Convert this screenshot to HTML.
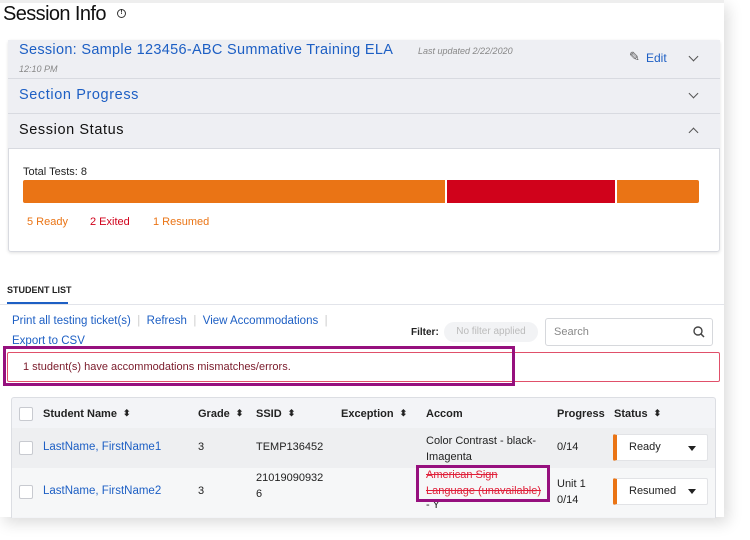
<!DOCTYPE html>
<html><head><meta charset="utf-8"><style>
*{margin:0;padding:0;box-sizing:border-box}
body{width:750px;height:540px;overflow:hidden;background:#fff;font-family:"Liberation Sans",sans-serif;position:relative}
.a{position:absolute;white-space:nowrap}
.page{position:absolute;left:0;top:0;width:724px;height:517px;background:#fff;box-shadow:4px 6px 14px rgba(0,0,0,.14)}
.blue{color:#1d5fc4}
.hdr{position:absolute;left:8px;width:712px;background:#eeeff3;border-bottom:1px solid #d8dae0}
.chev{position:absolute;width:7px;height:7px;border-right:1.3px solid #555;border-bottom:1.3px solid #555}
.sort{display:inline-block;margin-left:6px;font-size:9px;vertical-align:1px}
.t{font-size:11px;color:#222}
</style></head><body>
<div class="page">
<div class="a" style="left:0;top:0;width:724px;height:3px;background:#eee"></div>
<div class="a" style="left:3px;top:3px;font-size:20px;color:#111;letter-spacing:-.6px">Session Info</div>
<div class="a" style="left:117px;top:9px;width:9px;height:9px;border:1.3px solid #333;border-radius:50%;font-size:6px;line-height:7px;text-align:center;font-weight:bold">!</div>

<div class="a" style="left:8px;top:40px;width:712px;height:212px;border:1px solid #d8dae0;border-radius:3px;box-shadow:0 1px 3px rgba(0,0,0,.12)"></div>
<div class="hdr" style="top:40px;height:39px"></div>
<div class="a blue" style="left:19px;top:42px;font-size:14.5px;letter-spacing:.3px">Session: Sample 123456-ABC Summative Training ELA</div>
<div class="a" style="left:418px;top:46px;font-size:9px;font-style:italic;color:#888">Last updated 2/22/2020</div>
<div class="a" style="left:19px;top:64px;font-size:9px;font-style:italic;color:#888">12:10 PM</div>
<div class="a" style="left:629px;top:49px;font-size:13px;color:#555">✎</div>
<div class="a blue" style="left:646px;top:51px;font-size:12px">Edit</div>
<div class="chev" style="left:690px;top:53px;transform:rotate(45deg)"></div>
<div class="hdr" style="top:79px;height:35px"></div>
<div class="a blue" style="left:19px;top:87px;font-size:14.5px;letter-spacing:.6px">Section Progress</div>
<div class="chev" style="left:690px;top:90px;transform:rotate(45deg)"></div>
<div class="hdr" style="top:114px;height:35px"></div>
<div class="a" style="left:19px;top:122px;font-size:14.5px;letter-spacing:.6px;color:#111">Session Status</div>
<div class="chev" style="left:690px;top:129px;transform:rotate(-135deg)"></div>

<div class="a t" style="left:23px;top:166px">Total Tests: 8</div>
<div class="a" style="left:23px;top:180px;width:422px;height:23px;background:#ea7415;border-radius:2px 0 0 2px"></div>
<div class="a" style="left:447px;top:180px;width:168px;height:23px;background:#d0021b"></div>
<div class="a" style="left:617px;top:180px;width:82px;height:23px;background:#ea7415;border-radius:0 2px 2px 0"></div>
<div class="a" style="left:27px;top:216px;font-size:11px;color:#ea7415">5 Ready</div>
<div class="a" style="left:90px;top:216px;font-size:11px;color:#d0021b">2 Exited</div>
<div class="a" style="left:153px;top:216px;font-size:11px;color:#ea7415">1 Resumed</div>

<div class="a" style="left:7px;top:285px;font-size:9px;font-weight:bold;color:#222">STUDENT LIST</div>
<div class="a" style="left:0;top:304px;width:724px;height:1px;background:#e2e4ea"></div>
<div class="a" style="left:7px;top:302px;width:61px;height:2px;background:#1d5fc4"></div>
<div class="a blue" style="left:12px;top:315px;font-size:11.5px">Print all testing ticket(s) <span style="color:#ccc">&nbsp;|&nbsp;</span> Refresh <span style="color:#ccc">&nbsp;|&nbsp;</span> View Accommodations <span style="color:#ccc">&nbsp;|</span></div>
<div class="a blue" style="left:12px;top:335px;font-size:11.5px">Export to CSV</div>
<div class="a" style="left:411px;top:327px;font-size:10px;font-weight:bold;color:#222">Filter:</div>
<div class="a" style="left:444px;top:322px;width:94px;height:20px;background:#f2f3f5;border-radius:10px;font-size:10px;color:#bbb;line-height:20px;text-align:center">No filter applied</div>
<div class="a" style="left:545px;top:318px;width:168px;height:28px;border:1px solid #d6d8dc;border-radius:3px"></div>
<div class="a" style="left:554px;top:326px;font-size:11px;color:#888">Search</div>
<svg class="a" style="left:693px;top:326px" width="12" height="12"><circle cx="5" cy="5" r="4" fill="none" stroke="#444" stroke-width="1.4"/><line x1="8" y1="8" x2="11" y2="11" stroke="#444" stroke-width="1.5"/></svg>

<div class="a" style="left:7px;top:352px;width:713px;height:30px;border:1px solid #e0506a;border-radius:2px"></div>
<div class="a" style="left:23px;top:361px;font-size:11px;color:#7a1a2a">1 student(s) have accommodations mismatches/errors.</div>
<div class="a" style="left:3px;top:346px;width:512px;height:40px;border:3px solid #96107e"></div>

<div class="a" style="left:11px;top:397px;width:705px;height:121px;border:1px solid #dcdee3;border-bottom:none;border-radius:3px 3px 0 0;background:#f3f4f7"></div>
<div class="a" style="left:12px;top:428px;width:703px;height:40px;background:#eeeff1"></div>
<div class="a" style="left:12px;top:468px;width:703px;height:49px;background:#f6f7f8"></div>

<div class="a" style="left:19px;top:407px;width:14px;height:14px;border:1px solid #c8cad0;border-radius:2px;background:#fff"></div>
<div class="a" style="left:19px;top:441px;width:14px;height:14px;border:1px solid #c8cad0;border-radius:2px;background:#fff"></div>
<div class="a" style="left:19px;top:485px;width:14px;height:14px;border:1px solid #c8cad0;border-radius:2px;background:#fff"></div>

<div class="a t" style="left:43px;top:408px;font-weight:bold">Student Name<span class="sort">⬍</span></div>
<div class="a t" style="left:198px;top:408px;font-weight:bold">Grade<span class="sort">⬍</span></div>
<div class="a t" style="left:256px;top:408px;font-weight:bold">SSID<span class="sort">⬍</span></div>
<div class="a t" style="left:341px;top:408px;font-weight:bold">Exception<span class="sort">⬍</span></div>
<div class="a t" style="left:426px;top:408px;font-weight:bold">Accom</div>
<div class="a t" style="left:557px;top:408px;font-weight:bold">Progress</div>
<div class="a t" style="left:614px;top:408px;font-weight:bold">Status<span class="sort">⬍</span></div>

<div class="a blue" style="left:43px;top:441px;font-size:11.5px">LastName, FirstName1</div>
<div class="a t" style="left:198px;top:441px">3</div>
<div class="a t" style="left:256px;top:441px">TEMP136452</div>
<div class="a t" style="left:426px;top:433px;line-height:16px">Color Contrast - black-<br>Imagenta</div>
<div class="a t" style="left:557px;top:441px">0/14</div>
<div class="a" style="left:613px;top:434px;width:95px;height:27px;background:#fff;border:1px solid #e2e3e6;border-left:4px solid #ea7415;border-radius:2px"></div>
<div class="a t" style="left:629px;top:441px">Ready</div>
<div class="a" style="left:688px;top:446px;border:4px solid transparent;border-top:5px solid #222"></div>

<div class="a blue" style="left:43px;top:485px;font-size:11.5px">LastName, FirstName2</div>
<div class="a t" style="left:198px;top:485px">3</div>
<div class="a t" style="left:256px;top:470px;line-height:16px">21019090932<br>6</div>
<div class="a" style="left:426px;top:467px;font-size:11px;line-height:16px;color:#e0203a;text-decoration:line-through">American Sign<br>Language (unavailable)</div>
<div class="a t" style="left:426px;top:499px">- Y</div>
<div class="a t" style="left:557px;top:476px;line-height:16px">Unit 1<br>0/14</div>
<div class="a" style="left:613px;top:478px;width:95px;height:27px;background:#fff;border:1px solid #e2e3e6;border-left:4px solid #ea7415;border-radius:2px"></div>
<div class="a t" style="left:629px;top:485px">Resumed</div>
<div class="a" style="left:688px;top:489px;border:4px solid transparent;border-top:5px solid #222"></div>
<div class="a" style="left:416px;top:465px;width:134px;height:37px;border:3px solid #96107e"></div>
</div>
</body></html>
